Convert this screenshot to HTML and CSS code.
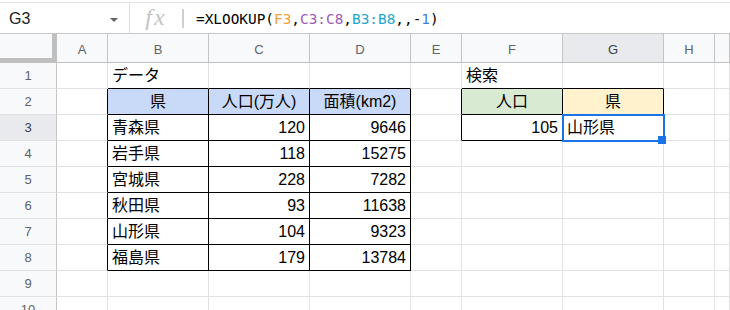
FILE: index.html
```html
<!DOCTYPE html>
<html lang="ja">
<head>
<meta charset="utf-8">
<link rel="stylesheet" href="styles.css">
</head>
<body>
<div class="fbar">
  <div class="namebox"><span class="nb-text">G3</span><span class="nb-arrow"></span></div>
  <div class="fx"><span class="fx-text">fx</span></div>
  <div class="fsep"></div>
  <div class="formula">=XLOOKUP(<span class="r1">F3</span>,<span class="r2">C3:C8</span>,<span class="r3">B3:B8</span>,,-<span class="n1">1</span>)</div>
</div>
<div class="grid">
  <div class="corner"><div class="corner-in"></div></div>
  <div class="ch">A</div><div class="ch">B</div><div class="ch">C</div><div class="ch">D</div><div class="ch">E</div><div class="ch">F</div><div class="ch selh">G</div><div class="ch">H</div><div class="ch"></div>

  <div class="rh">1</div>
  <div class="c"></div><div class="c tb">データ</div><div class="c tb"></div><div class="c tb"></div><div class="c"></div><div class="c tb">検索</div><div class="c tb"></div><div class="c"></div><div class="c"></div>

  <div class="rh">2</div>
  <div class="c tr"></div><div class="c tr tb hb ctr">県</div><div class="c tr tb hb ctr">人口(万人)</div><div class="c tr tb hb ctr">面積(km2)</div><div class="c tr"></div><div class="c tr tb hg ctr">人口</div><div class="c tr tb hy ctr">県</div><div class="c"></div><div class="c"></div>

  <div class="rh selh">3</div>
  <div class="c tr"></div><div class="c tr tb">青森県</div><div class="c tr tb num">120</div><div class="c tr tb num">9646</div><div class="c tr"></div><div class="c tr tb num">105</div><div class="c tr tb sel">山形県<span class="sel-box"></span><span class="sel-handle"></span></div><div class="c"></div><div class="c"></div>

  <div class="rh">4</div>
  <div class="c tr"></div><div class="c tr tb">岩手県</div><div class="c tr tb num">118</div><div class="c tr tb num">15275</div><div class="c"></div><div class="c"></div><div class="c"></div><div class="c"></div><div class="c"></div>

  <div class="rh">5</div>
  <div class="c tr"></div><div class="c tr tb">宮城県</div><div class="c tr tb num">228</div><div class="c tr tb num">7282</div><div class="c"></div><div class="c"></div><div class="c"></div><div class="c"></div><div class="c"></div>

  <div class="rh">6</div>
  <div class="c tr"></div><div class="c tr tb">秋田県</div><div class="c tr tb num">93</div><div class="c tr tb num">11638</div><div class="c"></div><div class="c"></div><div class="c"></div><div class="c"></div><div class="c"></div>

  <div class="rh">7</div>
  <div class="c tr"></div><div class="c tr tb">山形県</div><div class="c tr tb num">104</div><div class="c tr tb num">9323</div><div class="c"></div><div class="c"></div><div class="c"></div><div class="c"></div><div class="c"></div>

  <div class="rh">8</div>
  <div class="c tr"></div><div class="c tr tb">福島県</div><div class="c tr tb num">179</div><div class="c tr tb num">13784</div><div class="c"></div><div class="c"></div><div class="c"></div><div class="c"></div><div class="c"></div>

  <div class="rh">9</div>
  <div class="c"></div><div class="c"></div><div class="c"></div><div class="c"></div><div class="c"></div><div class="c"></div><div class="c"></div><div class="c"></div><div class="c"></div>

  <div class="rh">10</div>
  <div class="c"></div><div class="c"></div><div class="c"></div><div class="c"></div><div class="c"></div><div class="c"></div><div class="c"></div><div class="c"></div><div class="c"></div>
</div>
</body>
</html>
```
FILE: styles.css
```css
html, body {
  margin: 0;
  padding: 0;
}
body {
  width: 730px;
  height: 310px;
  overflow: hidden;
  background: #fff;
  font-family: "Liberation Sans", Arial, "Noto Sans CJK JP", sans-serif;
  color: #000;
}

/* formula bar */
.fbar {
  margin-top: 2px;
  height: 32px;
  box-sizing: border-box;
  border-top: 1px solid #e3e3e3;
  border-bottom: 1px solid #c7c7c7;
  display: flex;
  align-items: stretch;
}
.namebox {
  width: 130px;
  box-sizing: border-box;
  border-right: 1px solid #e0e0e0;
  display: flex;
  align-items: center;
  padding-left: 9px;
  font-size: 16px;
  color: #202124;
}
.nb-text {
  padding-top: 1px;
}
.nb-arrow {
  margin-left: auto;
  margin-right: 11px;
  width: 0;
  height: 0;
  border-left: 4px solid transparent;
  border-right: 4px solid transparent;
  border-top: 4px solid #5f6368;
  align-self: flex-start;
  margin-top: 15px;
}
.fx {
  width: 52px;
  display: flex;
  align-items: center;
  justify-content: center;
}
.fx-text {
  font-family: "Liberation Serif", "DejaVu Serif", serif;
  font-style: italic;
  font-size: 24px;
  letter-spacing: 2px;
  color: #c4c4c4;
  line-height: 1;
  margin-top: -2px;
}
.fsep {
  width: 2px;
  background: #cfcfcf;
  margin: 6px 0 5px 0;
}
.formula {
  margin-left: 12px;
  display: flex;
  align-items: center;
  font-family: "DejaVu Sans Mono", "Liberation Mono", monospace;
  font-size: 14.4px;
  color: #000;
  white-space: pre;
  padding-top: 1px;
}
.r1 { color: #f5a035; }
.r2 { color: #9e5bb4; }
.r3 { color: #1fa7c9; }
.n1 { color: #3f7fe0; }

/* grid */
.grid {
  display: grid;
  grid-template-columns: 57px 51px 101px 101px 101px 51px 101px 101px 51px 1fr;
  grid-template-rows: 29px;
  grid-auto-rows: 26px;
}
.corner {
  background: #f8f9fa;
  border-right: 1px solid #c0c0c0;
  border-bottom: 1px solid #c0c0c0;
}
.corner-in {
  width: 56px;
  height: 28px;
  box-sizing: border-box;
  border-right: 4px solid #bfbfbf;
  border-bottom: 4px solid #bfbfbf;
}
.ch {
  background: #f8f9fa;
  border-right: 1px solid #c4c4c4;
  border-bottom: 1px solid #c0c0c0;
  display: flex;
  align-items: center;
  justify-content: center;
  font-size: 13px;
  color: #5f6368;
  padding-top: 2px;
  box-sizing: border-box;
}
.rh {
  background: #f8f9fa;
  border-right: 1px solid #c4c4c4;
  border-bottom: 1px solid #e2e2e2;
  display: flex;
  align-items: center;
  justify-content: center;
  font-size: 13px;
  color: #5f6368;
  box-sizing: border-box;
}
.selh {
  background: #e8eaed;
  color: #3c4043;
}
.c {
  box-sizing: border-box;
  border-right: 1px solid #e2e2e2;
  border-bottom: 1px solid #e2e2e2;
  display: flex;
  align-items: flex-end;
  padding: 0 4px 3px 4px;
  font-size: 16px;
  line-height: 18px;
  white-space: nowrap;
}
.tb { border-bottom-color: #000; }
.tr { border-right-color: #000; }
.num { justify-content: flex-end; }
.ctr { justify-content: center; }
.hb { background: #c9daf8; }
.hg { background: #d9ead3; }
.hy { background: #fff2cc; }

.sel {
  position: relative;
}
.sel-box {
  position: absolute;
  left: -1px;
  top: -1px;
  right: -2px;
  bottom: -2px;
  border: 2px solid #1a73e8;
  z-index: 2;
}
.sel-handle {
  position: absolute;
  right: -3px;
  bottom: -4px;
  width: 8px;
  height: 8px;
  background: #1a73e8;
  z-index: 3;
}
```
